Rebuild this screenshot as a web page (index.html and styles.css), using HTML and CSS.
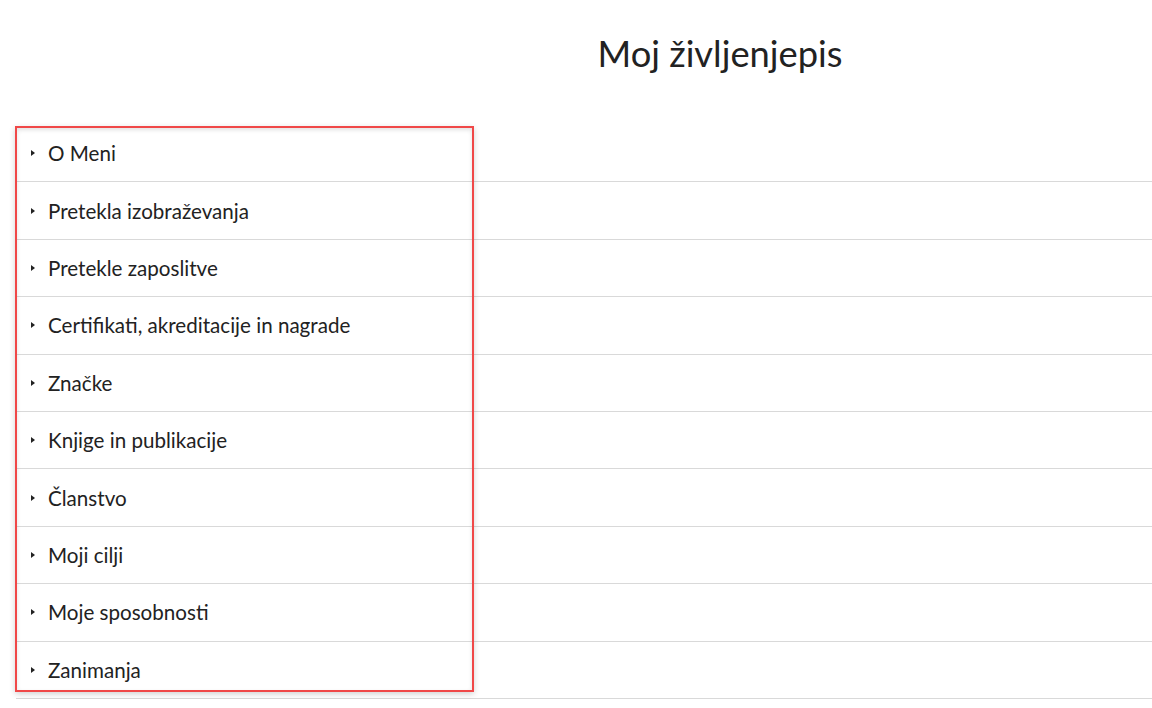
FILE: index.html
```html
<!DOCTYPE html>
<html lang="sl">
<head>
    <meta charset="UTF-8">
    <meta name="viewport" content="width=device-width, initial-scale=1.0">
    <title>Moj življenjepis</title>
    <link rel="stylesheet" href="styles.css">
</head>
<body>
    <h1 class="title">Moj življenjepis</h1>

    <div class="cv">
        <!-- Accordion sections -->
        <div class="cv-row"><span class="arrow"></span>O Meni</div>
        <div class="cv-row"><span class="arrow"></span>Pretekla izobraževanja</div>
        <div class="cv-row"><span class="arrow"></span>Pretekle zaposlitve</div>
        <div class="cv-row"><span class="arrow"></span>Certifikati, akreditacije in nagrade</div>
        <div class="cv-row"><span class="arrow"></span>Značke</div>
        <div class="cv-row"><span class="arrow"></span>Knjige in publikacije</div>
        <div class="cv-row"><span class="arrow"></span>Članstvo</div>
        <div class="cv-row"><span class="arrow"></span>Moji cilji</div>
        <div class="cv-row"><span class="arrow"></span>Moje sposobnosti</div>
        <div class="cv-row"><span class="arrow"></span>Zanimanja</div>

        <!-- Highlight frame -->
        <div class="highlight"></div>
    </div>
</body>
</html>
```

FILE: styles.css
```css
body {
    font-family: 'Lato', 'Open Sans', sans-serif;
    background-color: #ffffff;
    color: #222222;
    margin: 0;
    padding: 0;
}

.title {
    margin: 31px 0 0 288px;
    font-size: 36.3px;
    font-weight: 400;
    line-height: 44px;
    text-align: center;
    color: #222222;
}

.cv {
    position: relative;
    margin: 50px 0 0 16px;
}

.cv-row {
    display: flex;
    align-items: center;
    height: 57.4px;
    box-sizing: border-box;
    padding-left: 15px;
    border-bottom: 1px solid #d9d9d9;
    font-size: 20.6px;
}

.arrow {
    width: 0;
    height: 0;
    border-top: 3.5px solid transparent;
    border-bottom: 3.5px solid transparent;
    border-left: 4px solid #222222;
    margin-right: 13px;
}

.highlight {
    position: absolute;
    left: -1px;
    top: 1px;
    width: 459px;
    height: 566px;
    box-sizing: border-box;
    border: 2px solid #f04848;
    box-shadow: 0 2px 6px rgba(0, 0, 0, 0.18), inset 0 2px 4px rgba(0, 0, 0, 0.12);
}
```
